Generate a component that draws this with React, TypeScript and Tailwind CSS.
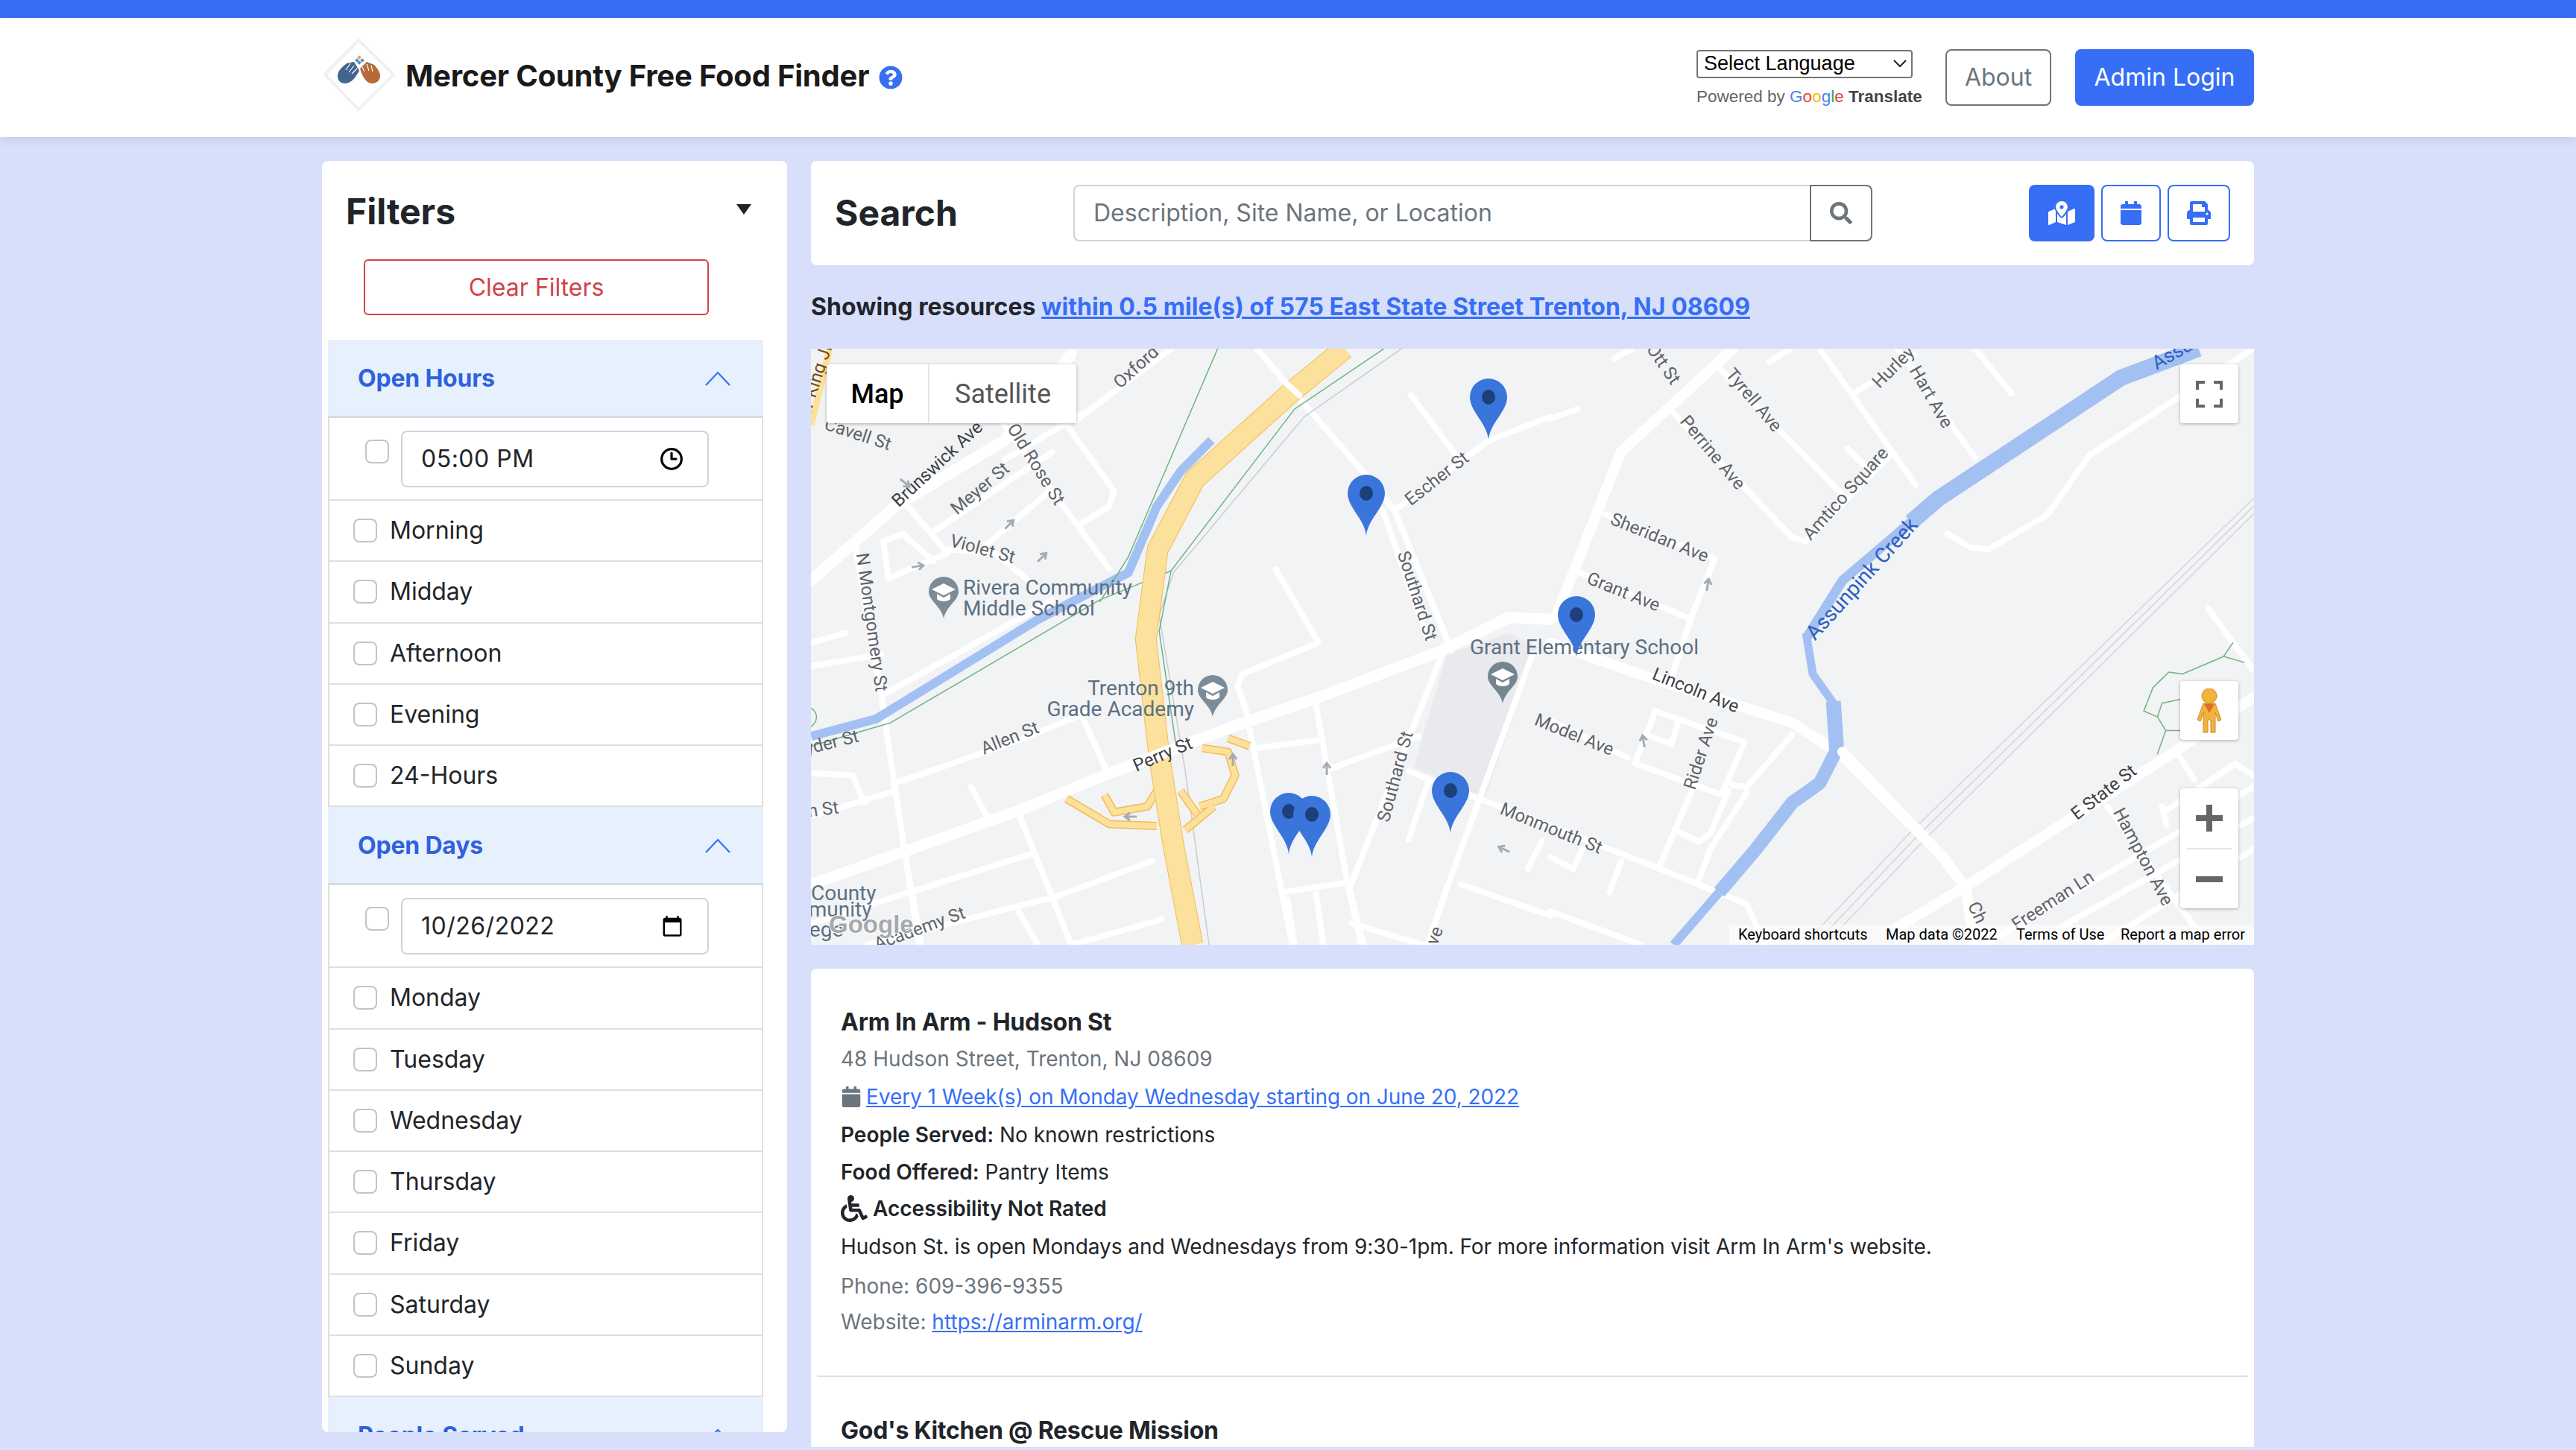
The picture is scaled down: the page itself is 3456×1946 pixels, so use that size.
import type { ReactNode } from "react";
import { FaCalendar, FaMapMarkedAlt, FaPrint, FaQuestionCircle, FaSearch, FaWheelchair } from "react-icons/fa";
import { LuClock3 } from "react-icons/lu";

const hours = ["Morning", "Midday", "Afternoon", "Evening", "24-Hours"];
const days = ["Monday", "Tuesday", "Wednesday", "Thursday", "Friday", "Saturday", "Sunday"];

// roads are traced from crops of the map, so they go through two scaled groups
const leftMain = [
  "M13 1390L210 1305 450 1200 640 1105 900 985 1080 910 1340 790 1480 705 1568 710",
  "M13 610L190 420 420 250 560 30",
];
const leftLocal = [
  "M105 515L160 900 190 1150 240 1545",
  "M415 205L640 580",
  "M550 210L650 380 640 420 580 465",
  "M270 485L520 280",
  "M210 410L300 540 175 605 165 510 205 490 270 560",
  "M300 530L400 540 470 610",
  "M380 520L510 385",
  "M950 15L1180 340 1240 430 1360 790",
  "M1215 430L1310 760",
  "M1240 430L1440 250 1568 190",
  "M1275 135L1370 290",
  "M990 580L1080 770 920 850 910 880 935 970",
  "M190 1130L450 1020 590 950",
  "M580 950L635 1100",
  "M20 1105L100 1110 125 1180",
  "M13 1215L190 1150",
  "M13 770L85 745",
  "M13 830L160 800",
  "M170 900L520 660",
  "M570 200L770 15",
  "M420 300L600 170",
  "M1270 1100L1568 1240",
  "M1380 1390L1568 1470",
  "M1340 800L1145 1400 1175 1545",
  "M1100 1095L1290 1010",
  "M1075 930L1140 1380 1170 1545",
  "M950 1040L1075 1020",
  "M935 990L1025 1545",
  "M1005 1410L1140 1385",
  "M1015 1430L1030 1545",
  "M1075 1415L1090 1545",
  "M1530 800L1350 1400 1310 1545",
  "M1310 1130L1270 1275",
  "M1550 1280L1520 1350",
  "M450 1210L560 1545",
  "M480 1310L13 1490",
  "M210 1310L245 1545",
  "M730 1330L530 1420 130 1545",
  "M750 1480L560 1545",
  "M350 1140L380 1210",
  "M450 1460L490 1545",
  "M1150 1490L1300 1545",
];
const rightMain = [
  "M0 770L220 860 530 975 640 1060 860 1320 910 1400 930 1545",
  "M760 1500L910 1395 1380 1040 1540 910",
  "M400 15L155 280 13 700",
];
const rightLocal = [
  "M370 65L640 390",
  "M270 180L530 500 560 510 750 280",
  "M590 15L800 365",
  "M665 130L800 30",
  "M760 15L930 295",
  "M930 15L1010 130",
  "M650 270L700 330",
  "M140 40L180 15",
  "M480 50L525 15",
  "M0 195L60 170",
  "M120 440L360 555 310 700 265 860",
  "M65 590L310 710",
  "M870 490L920 525 960 530 1090 440 1180 290 1540 15",
  "M1440 680L1540 840",
  "M1220 1190L1400 1480 1440 1545",
  "M950 1545L1400 1240 1540 1140",
  "M1050 1545L1540 1220",
  "M1200 1545L1540 1300",
  "M0 970L170 1065",
  "M230 945L425 1025 375 1160 185 1080Z",
  "M220 1010L265 1030 280 975",
  "M400 1135L430 1140 530 1005",
  "M310 1150L240 1340",
  "M280 1255L325 1280 350 1260 390 1150",
  "M430 1155L350 1300 325 1380",
  "M0 1240L240 1350 430 1440 470 1545",
  "M130 1410L155 1330",
  "M0 1320L50 1350 70 1300",
  "M0 1460L200 1545",
  "M1350 1200L1500 1080 1540 1110",
  "M1350 1240L1340 1190",
  "M1380 1065L1410 1120",
];

const ramps =
  "M550 1170L640 1235 740 1240M630 1160L650 1205 720 1190 740 1150M830 1190L880 1170 905 1110 890 1050 835 1040M800 1250L860 1190M890 1015L935 1035M740 1150L720 1190M790 1150L825 1210";

const labels: [string, number, number, number, string?, number?][] = [
  ["Brunswick Ave", 571, 283, -43, "#3c4043"],
  ["Meyer St", 597, 298, -40],
  ["Old Rose St", 630, 283, 58],
  ["Violet St", 598, 335, 15],
  ["Cavell St", 522, 265, 18],
  ["Oxford", 692, 224, -42],
  ["N Montgomery St", 530, 379, 82],
  ["Allen St", 615, 450, -22],
  ["Perry St", 708, 460, -23, "#3c4043"],
  ["Academy St", 560, 566, -20],
  ["Southard St", 862, 363, 72],
  ["Southard St", 850, 473, -75],
  ["Escher St", 875, 292, -38],
  ["Lincoln Ave", 1032, 421, 22, "#3c4043"],
  ["Model Ave", 958, 448, 22],
  ["Monmouth St", 944, 505, 22],
  ["Rider Ave", 1036, 459, -72],
  ["Sheridan Ave", 1010, 328, 22],
  ["Grant Ave", 988, 361, 22],
  ["Perrine Ave", 1042, 276, 50],
  ["Tyrell Ave", 1067, 244, 50],
  ["Ott St", 1012, 222, 55],
  ["Hurley", 1153, 224, -45],
  ["Hart Ave", 1175, 242, 60],
  ["Amtico Square", 1124, 301, -48],
  ["E State St", 1281, 483, -38, "#3c4043"],
  ["Hampton Ave", 1304, 522, 62],
  ["Freeman Ln", 1250, 549, -33],
  ["Ch", 1203, 556, 65],
  ["ve", 874, 570, -70],
  ["Assunpink Creek", 1134, 353, -48, "#2f5fbd", 28],
  ["Assunpink", 1335, 209, -30, "#2f5fbd", 26],
];

// little one way arrows, map coordinates
const arrows = [
  [126, 180, 40],
  [266, 236, -45],
  [310, 280, -45],
  [143, 292, -10],
  [566, 552, -90],
  [692, 564, -90],
  [429, 628, 180],
  [930, 672, 205],
  [1203, 317, -80],
  [1117, 527, -100],
];

const pins = [
  [909, 40],
  [745, 169],
  [1027, 332],
  [641, 596],
  [672, 600],
  [858, 568],
];

function Pin({ x, y }: { x: number; y: number }) {
  return (
    <g transform={`translate(${x} ${y})`}>
      <path d="M0 82C-2 60-25 44-25 25A25 25 0 0 1 25 25C25 44 2 60 0 82Z" fill="#3a75dc" />
      <ellipse cx="0" cy="25" rx="9" ry="10" fill="#1d3f7a" />
    </g>
  );
}

function SchoolMarker({ x, y, fade }: { x: number; y: number; fade?: boolean }) {
  return (
    <g transform={`translate(${x} ${y})`}>
      <path d="M0 56C-3 40-20 32-20 20A20 20 0 0 1 20 20C20 32 3 40 0 56Z" fill={fade ? "#75858f" : "#7b8c98"} />
      <path d="M0 9L16 17 0 25-16 17Z" fill="#fff" />
      <path d="M-9 23V30C-5 34 5 34 9 30V23L0 28Z" fill="#fff" />
    </g>
  );
}

function MapCanvas() {
  return (
    <svg viewBox="0 0 1936 800" className="block w-full h-full" style={{ fontFamily: "Roboto, sans-serif" }}>
      <rect width="1936" height="800" fill="#f2f3f5" />
      <g transform="translate(-8 -8) scale(.6378 .523)" fill="none" strokeLinecap="round" strokeLinejoin="round">
        <path d="M1350 800L1480 745 1540 780 1430 1170 1280 1090Z" fill="#e8eaed" vectorEffect="non-scaling-stroke" />
        {leftLocal.map((d) => (
          <path key={d} d={d} stroke="#fff" strokeWidth="8" vectorEffect="non-scaling-stroke" />
        ))}
        {leftMain.map((d) => (
          <path key={d} d={d} stroke="#fff" strokeWidth="15" vectorEffect="non-scaling-stroke" />
        ))}
        <path d="M1255 15L1050 190 775 590 745 700 800 1100 850 1545" stroke="#c8ccd0" strokeWidth="1.5" vectorEffect="non-scaling-stroke" />
        <path d="M13 1010L150 965 490 710 680 590 740 420 790 330 855 250" stroke="#a3c0f3" strokeWidth="12" strokeLinecap="butt" vectorEffect="non-scaling-stroke" />
        <path d="M868 15L680 550 620 665M1218 15L1030 170 770 585 620 660 180 975 13 1035M770 585L745 740 780 1030" stroke="#6fb47f" strokeWidth="1.5" vectorEffect="non-scaling-stroke" />
        <path d="M52 15L13 210" stroke="#fbe19c" strokeWidth="9" strokeLinecap="butt" vectorEffect="non-scaling-stroke" />
        {/* ramps under the highway */}
        <path d={ramps} stroke="#f5bb55" strokeWidth="11" strokeLinecap="butt" vectorEffect="non-scaling-stroke" />
        <path d={ramps} stroke="#fbe19c" strokeWidth="8" strokeLinecap="butt" vectorEffect="non-scaling-stroke" />
        <path d="M815 1545L775 1290 745 1060 717 760 742 530 820 350 1020 130 1135 15" stroke="#f5bb55" strokeWidth="29" strokeLinecap="butt" vectorEffect="non-scaling-stroke" />
        <path d="M815 1545L775 1290 745 1060 717 760 742 530 820 350 1020 130 1135 15" stroke="#fbe19c" strokeWidth="27" strokeLinecap="butt" vectorEffect="non-scaling-stroke" />
        <path d="M640 1105L900 985" stroke="#fff" strokeWidth="15" vectorEffect="non-scaling-stroke" />
        <path d="M1000 90L1040 135" stroke="#fff" strokeWidth="8" vectorEffect="non-scaling-stroke" />
        <path d="M13 938C28 950 28 970 13 985" stroke="#6fb47f" strokeWidth="1.5" vectorEffect="non-scaling-stroke" />
      </g>
      <g transform="translate(992 -8) scale(.6124 .523)" fill="none" strokeLinecap="round" strokeLinejoin="round">
        {rightLocal.map((d) => (
          <path key={d} d={d} stroke="#fff" strokeWidth="8" vectorEffect="non-scaling-stroke" />
        ))}
        {rightMain.map((d) => (
          <path key={d} d={d} stroke="#fff" strokeWidth="14" vectorEffect="non-scaling-stroke" />
        ))}
        <path d="M575 1520L790 1255 1540 400M590 1530L805 1265 1540 420M605 1540L820 1275 1540 440" stroke="#d3d5d9" strokeWidth="1.5" vectorEffect="non-scaling-stroke" />
        {/* the creek changes width along its run */}
        <g stroke="#a3c0f3" strokeLinecap="butt">
          <path d="M560 745L575 850 620 925" strokeWidth="11" vectorEffect="non-scaling-stroke" />
          <path d="M620 920L628 1060" strokeWidth="20" vectorEffect="non-scaling-stroke" />
          <path d="M625 1050L590 1130 530 1180 450 1300 370 1410" strokeWidth="18" vectorEffect="non-scaling-stroke" />
          <path d="M370 1410L270 1545" strokeWidth="12" vectorEffect="non-scaling-stroke" />
          <path d="M560 760L640 610 800 450" strokeWidth="13" vectorEffect="non-scaling-stroke" />
          <path d="M790 460L850 400 1250 90 1420 15" strokeWidth="22" vectorEffect="non-scaling-stroke" />
        </g>
        <path d="M640 1050L860 1320" stroke="#fff" strokeWidth="14" vectorEffect="non-scaling-stroke" />
        <path d="M1330 1055L1348 995 1330 960 1300 945 1320 885 1355 845 1385 850 1475 805 1495 770M1348 995H1380M1330 960L1340 925 1380 915M1475 805L1520 820" stroke="#6fb47f" strokeWidth="1.5" vectorEffect="non-scaling-stroke" />
      </g>

      {arrows.map(([x, y, angle]) => (
        <path key={x} d="M-8 0H5M1-5L8 0 1 5" fill="none" stroke="#a4abb3" strokeWidth="3" transform={`translate(${x} ${y}) rotate(${angle})`} />
      ))}

      {labels.map(([name, sx, sy, angle, color, size]) => {
        const x = sx * 2.204 - 1088;
        const y = sy * 2.204 - 468;
        return (
          <text
            key={name + sx}
            x={x}
            y={y}
            fontSize={size ?? 24}
            textAnchor="middle"
            dominantBaseline="middle"
            fill={color ?? "#5f6368"}
            transform={`rotate(${angle} ${x} ${y})`}
          >
            {name}
          </text>
        );
      })}
      <text x="8" y="40" fontSize="24" fill="#7a4a12" textAnchor="middle" dominantBaseline="middle" transform="rotate(-72 8 40)">Luther King Jr Blvd</text>
      <text x="-34" y="541" fontSize="24" fill="#5f6368" transform="rotate(-14 10 541)">Snyder St</text>
      <text x="-38" y="627" fontSize="24" fill="#5f6368" transform="rotate(-8 10 627)">Glen St</text>

      {/* poi labels */}
      <g fontSize="28" fill="#5b7083">
        <text x="204" y="330">Rivera Community</text>
        <text x="204" y="358">Middle School</text>
        <text x="514" y="465" textAnchor="end">Trenton 9th</text>
        <text x="514" y="493" textAnchor="end">Grade Academy</text>
        <text x="884" y="410">Grant Elementary School</text>
        <text x="0" y="740">County</text>
        <text x="-62" y="762">Community</text>
        <text x="-50" y="789">College</text>
      </g>
      <SchoolMarker x={178} y={306} />
      <SchoolMarker x={539} y={438} />
      <SchoolMarker x={928} y={420} fade />
      <text x="24" y="784" fontSize="33" fontWeight="700" fill="#a4a9ad" stroke="#fff" strokeWidth="2" paintOrder="stroke" style={{ fontFamily: "'Liberation Sans', sans-serif" }}>Google</text>

      {pins.map(([x, y]) => (
        <Pin key={x} x={x} y={y} />
      ))}
    </svg>
  );
}

function MapSection() {
  return (
    <div className="relative w-[1936px] h-[800px] mt-[40px] overflow-hidden">
      <MapCanvas />
      <div className="absolute left-[21px] top-[21px] flex h-[79px] w-[335px] bg-white rounded-sm shadow-[0_1px_4px_rgba(0,0,0,0.3)] font-[Roboto,sans-serif] text-[36px]">
        <div className="w-[138px] flex items-center justify-center font-medium text-black border-r-2 border-[#e6e6e6]">Map</div>
        <div className="flex-1 flex items-center justify-center text-[#565656]">Satellite</div>
      </div>
      <div className="absolute left-[1837px] top-[21px] w-[78px] h-[79px] bg-white rounded-sm shadow-[0_1px_4px_rgba(0,0,0,0.3)] flex items-center justify-center">
        <svg width="36" height="36" viewBox="0 0 36 36" fill="none" stroke="#666" strokeWidth="4">
          <path d="M2 12V2H12M24 2H34V12M34 24V34H24M12 34H2V24" />
        </svg>
      </div>
      <div className="absolute left-[1837px] top-[446px] w-[78px] h-[79px] bg-white rounded-sm shadow-[0_1px_4px_rgba(0,0,0,0.3)] flex items-center justify-center">
        <svg width="36" height="60" viewBox="0 0 36 60">
          <circle cx="18" cy="10" r="10" fill="#f2b33d" stroke="#c98a2b" />
          <path d="M10 20H26L34 42 30 44 26 32V59H20V42H16V59H10V32L6 44 2 42Z" fill="#f2b33d" stroke="#c98a2b" />
          <path d="M11 21H25L18 33Z" fill="#d9702b" />
        </svg>
      </div>
      <div className="absolute left-[1837px] top-[590px] w-[78px] h-[161px] bg-white rounded-sm shadow-[0_1px_4px_rgba(0,0,0,0.3)] flex flex-col items-center">
        <div className="h-[80px] w-full flex items-center justify-center">
          <svg width="36" height="36" viewBox="0 0 36 36" fill="#666">
            <path d="M14 0H22V14H36V22H22V36H14V22H0V14H14Z" />
          </svg>
        </div>
        <div className="w-[60px] h-0.5 bg-[#e6e6e6]" />
        <div className="h-[79px] w-full flex items-center justify-center">
          <svg width="36" height="8" viewBox="0 0 36 8" fill="#666">
            <rect width="36" height="8" />
          </svg>
        </div>
      </div>
      <div className="absolute right-0 bottom-0 h-[27px] w-[704px] bg-white/60 font-[Roboto,sans-serif] text-[20px] text-black leading-[27px]">
        <span className="absolute left-[12px]">Keyboard shortcuts</span>
        <span className="absolute left-[210px]">Map data ©2022</span>
        <span className="absolute left-[385px]">Terms of Use</span>
        <span className="absolute left-[525px]">Report a map error</span>
      </div>
    </div>
  );
}

function Logo() {
  return (
    <svg width="100" height="104" viewBox="0 0 100 104" className="shrink-0">
      <path d="M49 2L96 48 49 95 4 48Z" fill="#fff" stroke="#f1f1f1" strokeWidth="4" strokeLinejoin="round" />
      <path d="M21 50C21 43 27 38 33 33L43 31 50 43C46 50 40 60 31 60 25 60 21 56 21 50Z" fill="#41658f" />
      <path d="M51 40L60 31 70 35C74 40 78 44 78 50 78 56 73 60 67 60 59 60 54 50 51 40Z" fill="#b56a38" />
      <path d="M32 42L38 33M36 45L43 36M40 47L47 40M57 44L54 38M63 43L60 34M68 44L66 36" stroke="#fff" strokeWidth="1.2" />
      <rect x="48" y="23" width="4" height="4" fill="#e8a04a" transform="rotate(45 50 25)" />
      <rect x="45" y="27" width="4" height="4" fill="#5a8cc2" transform="rotate(45 47 29)" />
      <rect x="52" y="27" width="4" height="4" fill="#5a8cc2" transform="rotate(45 54 29)" />
      <rect x="48" y="30" width="4" height="4" fill="#5a8cc2" transform="rotate(45 50 32)" />
    </svg>
  );
}

function Header() {
  return (
    <header className="h-[160px] bg-white shadow-[0_4px_12px_rgba(0,0,0,0.08)] relative px-[432px] flex items-center justify-between">
      <div className="flex items-center">
        <Logo />
        <h1 className="ml-[12px] mb-[4px] text-[40px] font-bold tracking-[-0.2px] text-[#1a1a1a] leading-none whitespace-nowrap">Mercer County Free Food Finder</h1>
        <FaQuestionCircle className="ml-[13px] text-[#366ff5]" size={32} />
      </div>
      <div className="flex items-start">
        <div className="w-[304px] mt-[1px]">
          <div className="w-[290px] h-[38px] border-2 border-[#767676] rounded-[4px] flex items-center justify-between pl-[8px] pr-[6px] text-[27px] text-black font-['Liberation_Sans',sans-serif]">
            <span>Select Language</span>
            <svg width="18" height="11" viewBox="0 0 18 11" fill="none" stroke="#222" strokeWidth="2">
              <path d="M1 1L9 9 17 1" />
            </svg>
          </div>
          <div className="mt-[12px] text-[22.5px] leading-[26px] whitespace-nowrap text-[#666] font-['Liberation_Sans',sans-serif]">
            Powered by{" "}
            <span className="font-medium">
              <span className="text-[#4285f4]">G</span>
              <span className="text-[#ea4335]">o</span>
              <span className="text-[#fbbc05]">o</span>
              <span className="text-[#4285f4]">g</span>
              <span className="text-[#34a853]">l</span>
              <span className="text-[#ea4335]">e</span>
            </span>{" "}
            <span className="font-bold text-[#444]">Translate</span>
          </div>
        </div>
        <button className="ml-[30px] w-[142px] h-[76px] border-2 border-[#6c757d] rounded-lg text-[32px] text-[#6c757d]">About</button>
        <button className="ml-[32px] w-[240px] h-[76px] bg-[#366ff5] rounded-lg text-[32px] text-white">Admin Login</button>
      </div>
    </header>
  );
}

function CheckBox({ className }: { className?: string }) {
  return <input type="checkbox" className={`appearance-none block shrink-0 w-[32px] h-[32px] bg-white border-2 border-[#c4c4c4] rounded-lg ${className ?? ""}`} />;
}

function CheckRow({ label }: { label: string }) {
  return (
    <div className="h-[82.25px] flex items-center pl-[32px] border-b-2 border-[#dfdfdf]">
      <CheckBox />
      <span className="ml-[17px] text-[32px] text-[#212529] leading-none">{label}</span>
    </div>
  );
}

function SectionHead({ title }: { title: string }) {
  return (
    <div className="h-[105px] bg-[#e7f0fd] border-b-[3px] border-[#d4dbe5] flex items-center justify-between pl-[40px] pr-[44px] pt-[2px]">
      <span className="text-[32px] font-bold tracking-[-0.2px] text-[#2f62dc] leading-none">{title}</span>
      <svg width="34" height="20" viewBox="0 0 34 20" fill="none" stroke="#366ff5" strokeWidth="2.2">
        <path d="M1 19L17 2 33 19" />
      </svg>
    </div>
  );
}

function FilterGroup({ title, value, rows, icon }: { title: string; value: string; rows: string[]; icon: ReactNode }) {
  return (
    <section>
      <SectionHead title={title} />
      <div className="border-x-2 border-[#dfdfdf]">
        <div className="h-[111px] flex items-center pl-[48px] border-b-2 border-[#dfdfdf]">
          <CheckBox className="mt-[-20px]" />
          <div className="ml-[16px] w-[413px] h-[76px] border-2 border-[#ced4da] rounded-lg flex items-center justify-between pl-[25px] pr-[32px] text-[32px] text-[#212529]">
            <span className="tracking-[0.5px]">{value}</span>
            {icon}
          </div>
        </div>
        {rows.map((row) => (
          <CheckRow key={row} label={row} />
        ))}
      </div>
    </section>
  );
}

function Sidebar() {
  return (
    <aside className="w-[624px] h-[1706px] shrink-0 bg-white rounded-lg overflow-hidden">
      <div className="h-[132px] flex items-center justify-between pl-[32px] pr-[48px] pt-[4px]">
        <h2 className="text-[48px] font-bold text-[#212529] leading-none">Filters</h2>
        <svg width="20" height="14" viewBox="0 0 20 14" fill="#212529" className="mb-[6px]">
          <path d="M0 0H20L10 14Z" />
        </svg>
      </div>
      <button className="block ml-[56px] w-[463px] h-[75px] border-2 border-[#cf4349] rounded-md text-[32px] text-[#cf4349]">Clear Filters</button>
      <div className="mt-[33px] mx-[8px] w-[584px]">
        <FilterGroup title="Open Hours" value="05:00 PM" rows={hours} icon={<LuClock3 size={32} strokeWidth={2.4} className="text-black" />} />
        <FilterGroup
          title="Open Days"
          value="10/26/2022"
          rows={days}
          icon={
            <svg width="30" height="30" viewBox="0 0 24 24" fill="#000">
              <path d="M20 3h-1V1h-2v2H7V1H5v2H4c-1.1 0-2 .9-2 2v16c0 1.100.9 2 2 2h16c1.100 0 2-.9 2-2V5c0-1.100-.9-2-2-2zm0 18H4V8h16v13z" />
            </svg>
          }
        />
        <SectionHead title="People Served" />
      </div>
    </aside>
  );
}

function SearchBar() {
  return (
    <div className="h-[140px] bg-white rounded-lg flex items-center pl-[32px] pr-[32px]">
      <h2 className="w-[320px] text-[48px] font-bold text-[#212529] leading-none">Search</h2>
      <div className="w-[988px] h-[76px] border-2 border-r-0 border-[#ced4da] rounded-l-lg flex items-center pl-[25px] text-[32px] text-[#6c757d]">
        Description, Site Name, or Location
      </div>
      <div className="w-[84px] h-[76px] border-2 border-[#6c757d] rounded-r-lg flex items-center justify-center">
        <FaSearch size={30} className="text-[#6c757d]" />
      </div>
      <div className="ml-auto flex gap-[9px]">
        <div className="w-[88px] h-[76px] bg-[#366ff5] rounded-lg flex items-center justify-center">
          <FaMapMarkedAlt size={36} className="text-white" />
        </div>
        <div className="w-[80px] h-[76px] border-2 border-[#366ff5] rounded-lg flex items-center justify-center">
          <FaCalendar size={32} className="text-[#366ff5]" />
        </div>
        <div className="w-[84px] h-[76px] border-2 border-[#366ff5] rounded-lg flex items-center justify-center">
          <FaPrint size={32} className="text-[#366ff5]" />
        </div>
      </div>
    </div>
  );
}

function Results() {
  return (
    <div className="mt-[32px] w-[1936px] bg-white rounded-t-lg pt-[50px] flex-1 text-[28px] leading-[40px] text-[#212529]">
      <div className="px-[40px]">
        <h3 className="text-[32px] leading-[44px] font-bold tracking-[-0.25px]">Arm In Arm - Hudson St</h3>
        <p className="mt-[7px] text-[#6c757d]">48 Hudson Street, Trenton, NJ 08609</p>
        <p className="mt-[11px] flex items-center">
          <FaCalendar size={28} className="text-[#6c757d] mr-[6px]" />
          <a className="text-[#366ff5] underline tracking-[-0.07px]">Every 1 Week(s) on Monday Wednesday starting on June 20, 2022</a>
        </p>
        <p className="mt-[11px]"><b className="font-semibold">People Served:</b> No known restrictions</p>
        <p className="mt-[10px]"><b className="font-semibold">Food Offered:</b> Pantry Items</p>
        <p className="mt-[9px] flex items-center font-semibold">
          <FaWheelchair size={36} className="mr-[7px] text-[#212529]" />
          Accessibility Not Rated
        </p>
        <p className="mt-[11px] tracking-[-0.07px]">Hudson St. is open Mondays and Wednesdays from 9:30-1pm. For more information visit Arm In Arm's website.</p>
        <p className="mt-[13px] text-[#6c757d]">Phone: 609-396-9355</p>
        <p className="mt-[8px] text-[#6c757d]">Website: <a className="text-[#366ff5] underline">https://arminarm.org/</a></p>
      </div>
      <hr className="mt-[52px] mx-[8px] border-t-2 border-[#e0e0e0]" />
      <h3 className="mt-[50px] px-[40px] text-[32px] leading-[44px] font-bold tracking-[-0.25px]">God's Kitchen @ Rescue Mission</h3>
    </div>
  );
}

export default function App() {
  return (
    <div className="h-[1946px] overflow-hidden bg-[#d8dffb] font-[Inter,sans-serif]">
      <div className="h-[24px] bg-[#366ff5]" />
      <Header />
      <main className="flex gap-[32px] px-[432px] pt-[32px]">
        <Sidebar />
        <div className="w-[1936px] flex flex-col">
          <SearchBar />
          <p className="mt-[40px] text-[32px] leading-[32px] font-bold tracking-[0.06px] text-[#212529]">
            Showing resources <a className="text-[#366ff5] underline">within 0.5 mile(s) of 575 East State Street Trenton, NJ 08609</a>
          </p>
          <MapSection />
          <Results />
        </div>
      </main>
    </div>
  );
}
